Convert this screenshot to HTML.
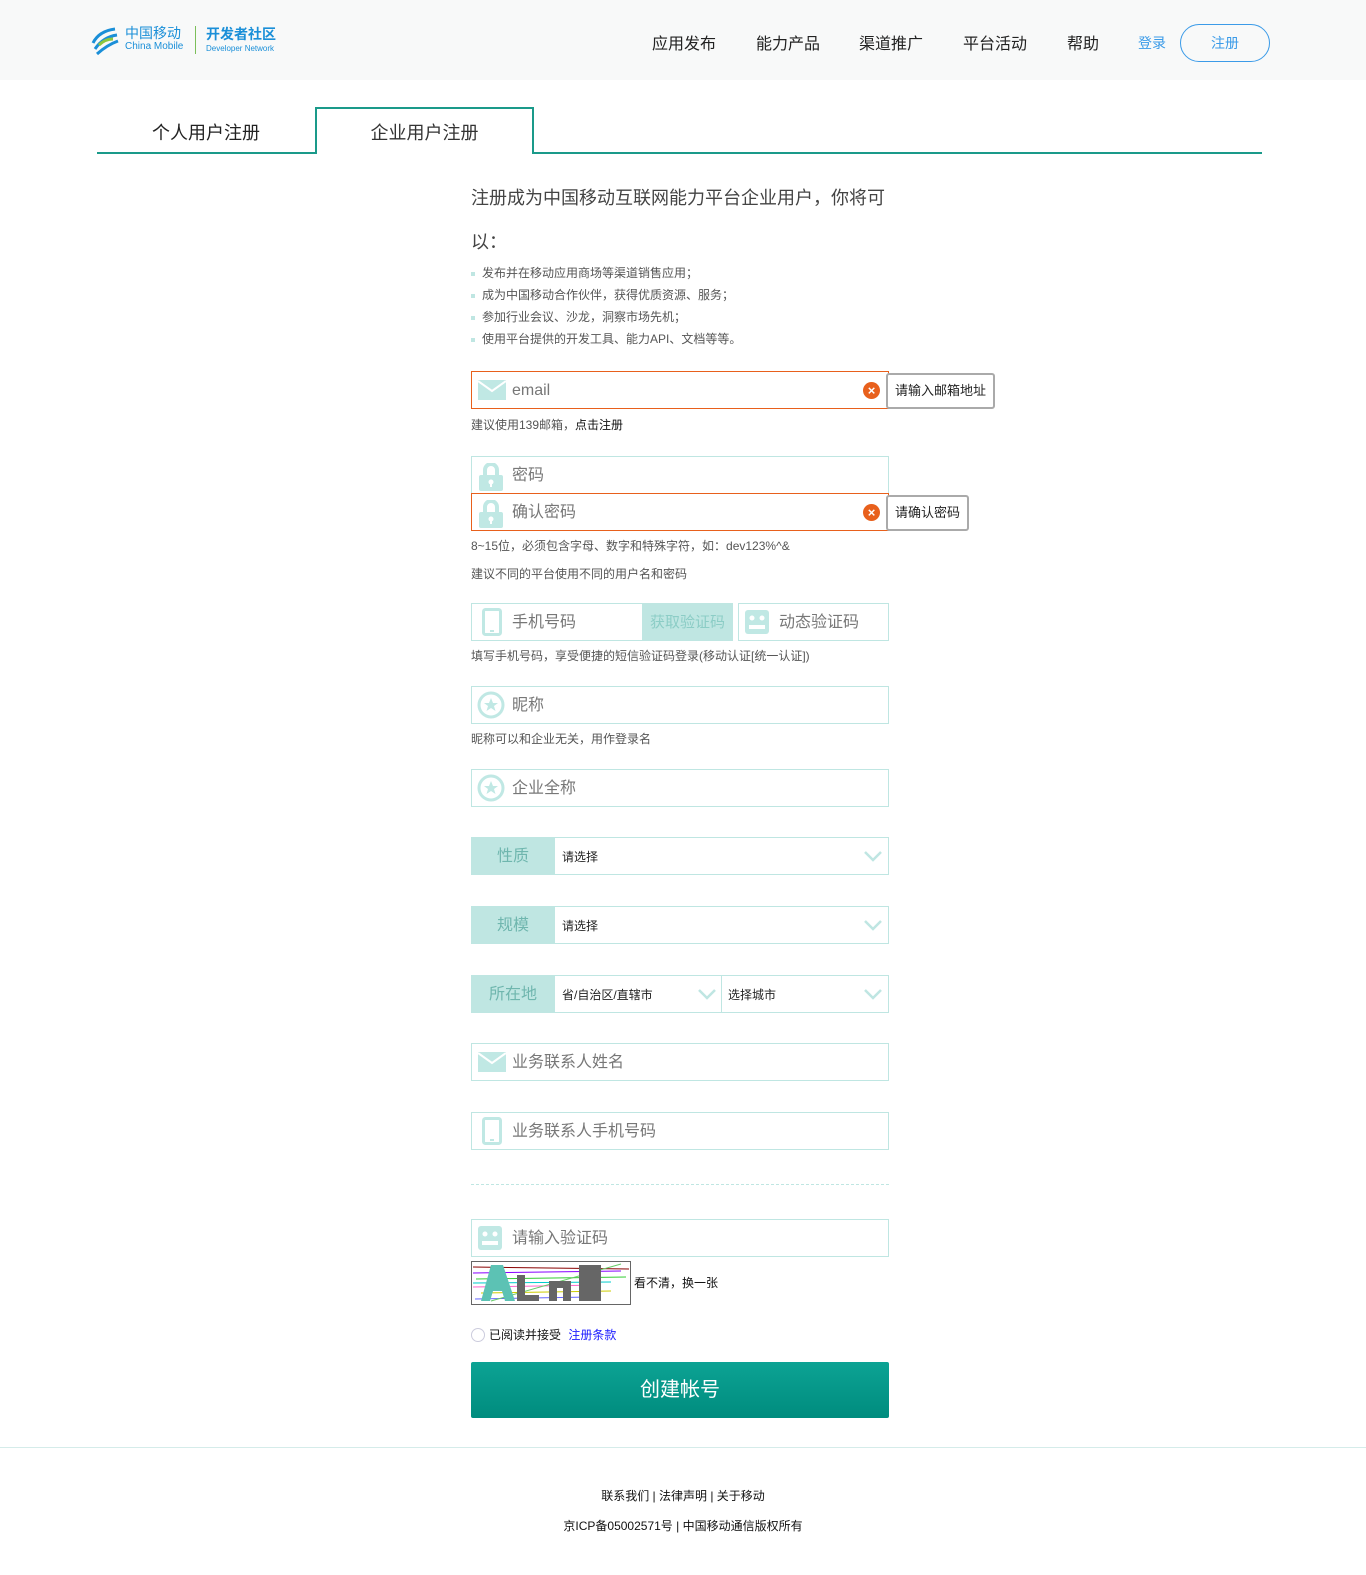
<!DOCTYPE html>
<html><head><meta charset="utf-8"><style>
*{margin:0;padding:0;box-sizing:border-box}
body{width:1366px;height:1575px;position:relative;background:#fff;font-family:"Liberation Sans","Noto Sans CJK SC",sans-serif;color:#333;overflow:hidden}
.a{position:absolute}
.hdr{left:0;top:0;width:1366px;height:80px;background:#f8f9f9}
.nav{top:30px;font-size:16px;color:#222}
.inp{position:absolute;left:471px;width:418px;height:38px;border:1px solid #bfe6e2;background:#fff}
.inp .ph{position:absolute;left:40px;top:1px;line-height:36px;font-size:16px;color:#777}
.inp svg{position:absolute;left:6px;top:6px}
.hint{position:absolute;left:471px;font-size:12px;color:#555}
.err{border-color:#e8601c}
.x{position:absolute;right:8px;top:10px;width:17px;height:17px;border-radius:50%;background:#e8601c;color:#fff;font-size:13px;font-weight:bold;text-align:center;line-height:17px}
.tip{position:absolute;height:36px;border:2px solid #aaa;border-radius:3px;background:#fff;font-size:13px;color:#222;line-height:32px;padding:0 7px}
.sel{position:absolute;left:471px;width:418px;height:38px;border:1px solid #bfe6e2;background:#fff}
.sel .lb{position:absolute;left:-1px;top:-1px;width:84px;height:38px;background:#bfe6e2;color:#6fb6ae;font-size:16px;text-align:center;line-height:40px}
.sel .t{position:absolute;top:1px;line-height:36px;font-size:12px;color:#222}
.chev{position:absolute;top:12px;width:18px;height:12px}
</style></head><body>
<div class="a hdr"></div>
<svg class="a" style="left:89px;top:23px" width="32" height="34" viewBox="0 0 32 34"><g fill="none" stroke="#1a8fd8" stroke-width="3"><path d="M4 20 Q10 8 26 6"/><path d="M6 26 Q14 14 28 12"/><path d="M8 31 Q18 22 29 18"/></g><path d="M10 22 Q16 16 24 16" stroke="#8cc63f" stroke-width="3" fill="none"/></svg>
<div class="a" style="left:125px;top:25px;font-size:14px;color:#1a8fd8;line-height:17px">中国移动</div>
<div class="a" style="left:125px;top:41px;font-size:10px;color:#1a8fd8">China Mobile</div>
<div class="a" style="left:195px;top:26px;width:1px;height:28px;background:#7cbf5a"></div>
<div class="a" style="left:206px;top:26px;font-size:14px;color:#1a8fd8;font-weight:bold;line-height:17px">开发者社区</div>
<div class="a" style="left:206px;top:44px;font-size:8px;color:#1a8fd8">Developer Network</div>
<div class="a nav" style="left:652px">应用发布</div>
<div class="a nav" style="left:756px">能力产品</div>
<div class="a nav" style="left:859px">渠道推广</div>
<div class="a nav" style="left:963px">平台活动</div>
<div class="a nav" style="left:1067px">帮助</div>
<div class="a" style="left:1138px;top:33px;font-size:14px;color:#3b9be8">登录</div>
<div class="a" style="left:1180px;top:24px;width:90px;height:38px;border:1px solid #3b9be8;border-radius:19px;color:#3b9be8;font-size:14px;text-align:center;line-height:36px">注册</div>

<div class="a" style="left:97px;top:152px;width:1165px;height:2px;background:#1a9a8a"></div>
<div class="a" style="left:315px;top:107px;width:219px;height:47px;border:2px solid #1a9a8a;border-bottom:none;background:#fff"></div>
<div class="a" style="left:97px;top:119px;width:218px;text-align:center;font-size:18px;color:#222">个人用户注册</div>
<div class="a" style="left:315px;top:119px;width:219px;text-align:center;font-size:18px;color:#333">企业用户注册</div>

<div class="a" style="left:471px;top:184px;font-size:18px;color:#444">注册成为中国移动互联网能力平台企业用户，你将可</div>
<div class="a" style="left:471px;top:228px;font-size:18px;color:#444">以：</div>
<div class="a" style="left:471px;top:262px;font-size:12px;color:#555;line-height:22px">
<div><span style="display:inline-block;width:4px;height:4px;background:#bfe6e2;vertical-align:middle;margin-right:7px"></span>发布并在移动应用商场等渠道销售应用；</div>
<div><span style="display:inline-block;width:4px;height:4px;background:#bfe6e2;vertical-align:middle;margin-right:7px"></span>成为中国移动合作伙伴，获得优质资源、服务；</div>
<div><span style="display:inline-block;width:4px;height:4px;background:#bfe6e2;vertical-align:middle;margin-right:7px"></span>参加行业会议、沙龙，洞察市场先机；</div>
<div><span style="display:inline-block;width:4px;height:4px;background:#bfe6e2;vertical-align:middle;margin-right:7px"></span>使用平台提供的开发工具、能力API、文档等等。</div>
</div>

<div class="inp err" style="top:371px"><svg width="28" height="22" viewBox="0 0 28 22" style="top:8px"><rect width="28" height="20" fill="#c0e8e4"/><path d="M0 1 L14 11 L28 1" stroke="#fff" stroke-width="2" fill="none"/></svg><span class="ph">email</span><div class="x">×</div></div>
<div class="tip" style="left:886px;top:373px">请输入邮箱地址</div>
<div class="hint" style="top:416px">建议使用139邮箱，<span style="color:#111">点击注册</span></div>

<div class="inp" style="top:456px"><svg width="26" height="28" viewBox="0 0 26 28"><path d="M7 12 V7 a6 6 0 0 1 12 0 V12" stroke="#c0e8e4" stroke-width="4" fill="none"/><rect x="1" y="12" width="24" height="16" rx="2" fill="#c0e8e4"/><circle cx="13" cy="19" r="2.5" fill="#fff"/><rect x="12" y="19" width="2" height="5" fill="#fff"/></svg><span class="ph">密码</span></div>
<div class="inp err" style="top:493px"><svg width="26" height="28" viewBox="0 0 26 28"><path d="M7 12 V7 a6 6 0 0 1 12 0 V12" stroke="#c0e8e4" stroke-width="4" fill="none"/><rect x="1" y="12" width="24" height="16" rx="2" fill="#c0e8e4"/><circle cx="13" cy="19" r="2.5" fill="#fff"/><rect x="12" y="19" width="2" height="5" fill="#fff"/></svg><span class="ph">确认密码</span><div class="x">×</div></div>
<div class="tip" style="left:886px;top:495px">请确认密码</div>
<div class="hint" style="top:537px">8~15位，必须包含字母、数字和特殊字符，如：dev123%^&amp;</div>
<div class="hint" style="top:565px">建议不同的平台使用不同的用户名和密码</div>

<div class="inp" style="top:603px;width:262px"><svg width="20" height="28" viewBox="0 0 20 28" style="left:10px;top:4px"><rect x="1.5" y="1.5" width="17" height="25" rx="2" stroke="#c0e8e4" stroke-width="3" fill="none"/><rect x="8" y="22" width="4" height="2" fill="#c0e8e4"/></svg><span class="ph">手机号码</span><div style="position:absolute;right:-1px;top:-1px;width:91px;height:38px;background:#bfe6e2;color:#8ccdc6;font-size:15px;text-align:center;line-height:39px">获取验证码</div></div>
<div class="inp" style="top:603px;left:738px;width:151px"><svg width="24" height="24" viewBox="0 0 24 24"><rect width="24" height="24" rx="3" fill="#c0e8e4"/><circle cx="7" cy="8" r="2.5" fill="#fff"/><circle cx="17" cy="8" r="2.5" fill="#fff"/><rect x="4" y="15" width="16" height="4" fill="#fff"/></svg><span class="ph">动态验证码</span></div>
<div class="hint" style="top:647px">填写手机号码，享受便捷的短信验证码登录(移动认证[统一认证])</div>

<div class="inp" style="top:686px"><svg width="28" height="28" viewBox="0 0 28 28" style="left:5px;top:4px"><circle cx="14" cy="14" r="12" stroke="#c0e8e4" stroke-width="3" fill="none"/><path d="M14 7 L16 12 L21 12 L17 15 L18.5 20 L14 17 L9.5 20 L11 15 L7 12 L12 12Z" fill="#c0e8e4"/></svg><span class="ph">昵称</span></div>
<div class="hint" style="top:730px">昵称可以和企业无关，用作登录名</div>
<div class="inp" style="top:769px"><svg width="28" height="28" viewBox="0 0 28 28" style="left:5px;top:4px"><circle cx="14" cy="14" r="12" stroke="#c0e8e4" stroke-width="3" fill="none"/><path d="M14 7 L16 12 L21 12 L17 15 L18.5 20 L14 17 L9.5 20 L11 15 L7 12 L12 12Z" fill="#c0e8e4"/></svg><span class="ph">企业全称</span></div>

<div class="sel" style="top:837px"><div class="lb">性质</div><span class="t" style="left:90px">请选择</span><svg class="chev" style="left:392px" viewBox="0 0 18 12"><path d="M1 2 L9 10 L17 2" stroke="#bfe6e2" stroke-width="2.5" fill="none"/></svg></div>
<div class="sel" style="top:906px"><div class="lb">规模</div><span class="t" style="left:90px">请选择</span><svg class="chev" style="left:392px" viewBox="0 0 18 12"><path d="M1 2 L9 10 L17 2" stroke="#bfe6e2" stroke-width="2.5" fill="none"/></svg></div>
<div class="sel" style="top:975px"><div class="lb">所在地</div><span class="t" style="left:90px">省/自治区/直辖市</span><svg class="chev" style="left:226px" viewBox="0 0 18 12"><path d="M1 2 L9 10 L17 2" stroke="#bfe6e2" stroke-width="2.5" fill="none"/></svg><div style="position:absolute;left:249px;top:0;width:1px;height:36px;background:#bfe6e2"></div><span class="t" style="left:256px">选择城市</span><svg class="chev" style="left:392px" viewBox="0 0 18 12"><path d="M1 2 L9 10 L17 2" stroke="#bfe6e2" stroke-width="2.5" fill="none"/></svg></div>

<div class="inp" style="top:1043px"><svg width="28" height="22" viewBox="0 0 28 22" style="top:8px"><rect width="28" height="20" fill="#c0e8e4"/><path d="M0 1 L14 11 L28 1" stroke="#fff" stroke-width="2" fill="none"/></svg><span class="ph">业务联系人姓名</span></div>
<div class="inp" style="top:1112px"><svg width="20" height="28" viewBox="0 0 20 28" style="left:10px;top:4px"><rect x="1.5" y="1.5" width="17" height="25" rx="2" stroke="#c0e8e4" stroke-width="3" fill="none"/><rect x="8" y="22" width="4" height="2" fill="#c0e8e4"/></svg><span class="ph">业务联系人手机号码</span></div>
<div class="a" style="left:471px;top:1184px;width:418px;border-top:1px dashed #bfe6e2"></div>
<div class="inp" style="top:1219px"><svg width="24" height="24" viewBox="0 0 24 24"><rect width="24" height="24" rx="3" fill="#c0e8e4"/><circle cx="7" cy="8" r="2.5" fill="#fff"/><circle cx="17" cy="8" r="2.5" fill="#fff"/><rect x="4" y="15" width="16" height="4" fill="#fff"/></svg><span class="ph">请输入验证码</span></div>

<svg class="a" style="left:471px;top:1261px" width="160" height="44" viewBox="0 0 160 44"><rect x="0.5" y="0.5" width="159" height="43" fill="#fff" stroke="#666"/><g stroke-width="1"><line x1="2" y1="6" x2="158" y2="8" stroke="#800"/><line x1="2" y1="12" x2="150" y2="10" stroke="#80f"/><line x1="5" y1="18" x2="155" y2="16" stroke="#3c3"/><line x1="2" y1="26" x2="130" y2="24" stroke="#f6c"/><line x1="10" y1="32" x2="140" y2="30" stroke="#cc0"/><line x1="4" y1="38" x2="120" y2="36" stroke="#66f"/><line x1="20" y1="40" x2="150" y2="3" stroke="#6c6"/><line x1="2" y1="22" x2="140" y2="21" stroke="#0cc"/></g><path d="M10 40 L20 4 L32 4 L44 40 L34 40 L31 30 L22 30 L19 40Z" fill="#5cc2b4"/><path d="M46 14 H54 V34 H68 V40 H46Z" fill="#666"/><path d="M78 40 V20 H100 V40 H92 V27 H86 V40Z" fill="#666"/><rect x="108" y="4" width="22" height="36" fill="#666"/></svg>
<div class="a" style="left:634px;top:1274px;font-size:12px;color:#111">看不清，换一张</div>
<div class="a" style="left:471px;top:1328px;width:14px;height:14px;border:1px solid #ccd;border-radius:50%"></div>
<div class="a" style="left:489px;top:1326px;font-size:12px;color:#111">已阅读并接受 <span style="color:#1a1aff;margin-left:4px">注册条款</span></div>
<div class="a" style="left:471px;top:1362px;width:418px;height:56px;border-radius:2px;background:linear-gradient(#0ca394,#008c7e);color:#fff;font-size:20px;text-align:center;line-height:56px">创建帐号</div>

<div class="a" style="left:0;top:1447px;width:1366px;height:1px;background:#d5ecea"></div>
<div class="a" style="left:0;top:1487px;width:1366px;text-align:center;font-size:12px;color:#111">联系我们 | 法律声明 | 关于移动</div>
<div class="a" style="left:0;top:1517px;width:1366px;text-align:center;font-size:12px;color:#111">京ICP备05002571号 | 中国移动通信版权所有</div>
</body></html>
